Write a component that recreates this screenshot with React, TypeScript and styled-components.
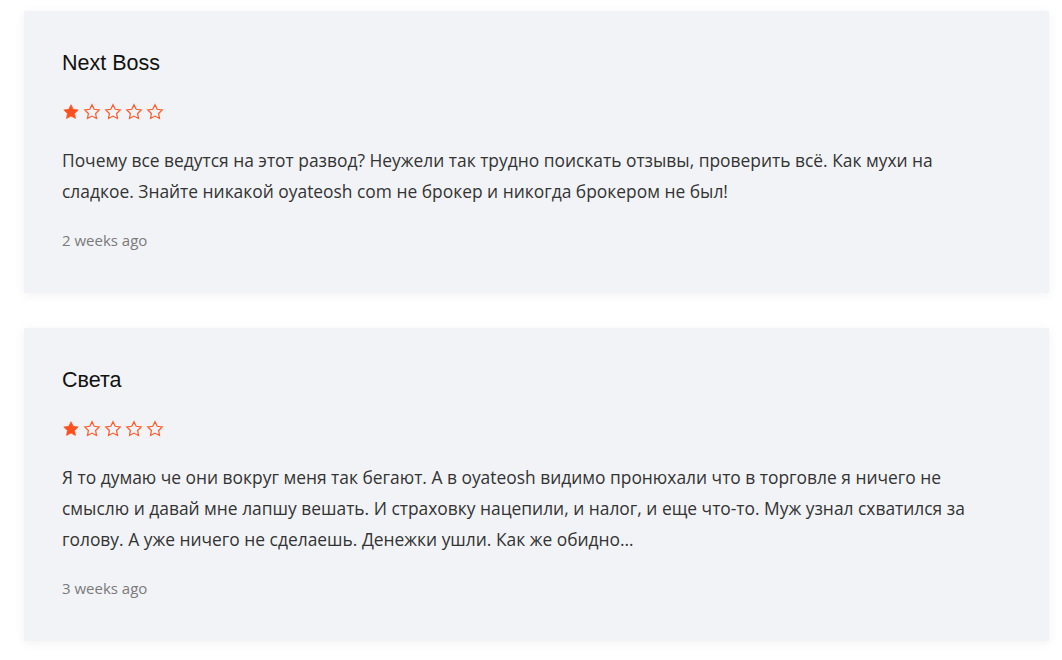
import React from "react";
import styled, { createGlobalStyle } from "styled-components";

const Global = createGlobalStyle`
  html, body { margin: 0; padding: 0; background: #ffffff; }
  * { box-sizing: border-box; }
`;

const Page = styled.div`
  display: flex;
  flex-direction: column;
  gap: 35px;
  padding: 11px 13px 20px 24px;
`;

const Card = styled.article`
  background: #f2f3f7;
  box-shadow: 0 2px 10px rgba(0, 0, 0, 0.06);
  padding: 38px 60px 42px 38px;
  display: flex;
  flex-direction: column;
`;

const Name = styled.h3`
  margin: 0;
  font-family: "Liberation Sans", Arial, sans-serif;
  font-weight: 400;
  font-size: 21.5px;
  line-height: 28px;
  color: #111111;
`;

const Stars = styled.div`
  display: flex;
  gap: 3px;
  margin-top: 26px;
  height: 18px;
  align-items: center;
`;

const Body = styled.p`
  margin: 24px 0 0 0;
  font-family: "Open Sans", sans-serif;
  font-size: 17.4px;
  line-height: 31px;
  color: #333333;
`;

const Date = styled.div`
  margin-top: 23px;
  font-family: "Open Sans", sans-serif;
  font-size: 15px;
  line-height: 21px;
  color: #7a7a7a;
`;

const StarPath =
  "M12 2.2l2.95 6.1 6.7.95-4.85 4.7 1.15 6.65L12 17.45l-5.95 3.15 1.15-6.65-4.85-4.7 6.7-.95z";

const Star: React.FC<{ filled: boolean }> = ({ filled }) => (
  <svg width="18" height="18" viewBox="0 0 24 24">
    <path
      d={StarPath}
      fill={filled ? "#ff4f1f" : "none"}
      stroke="#ff5a2a"
      strokeWidth={filled ? 1 : 1.6}
      strokeLinejoin="miter"
    />
  </svg>
);

const reviews = [
  {
    name: "Next Boss",
    rating: 1,
    text:
      "Почему все ведутся на этот развод? Неужели так трудно поискать отзывы, проверить всё. Как мухи на сладкое. Знайте никакой oyateosh com не брокер и никогда брокером не был!",
    date: "2 weeks ago",
  },
  {
    name: "Света",
    rating: 1,
    text:
      "Я то думаю че они вокруг меня так бегают. А в oyateosh видимо пронюхали что в торговле я ничего не смыслю и давай мне лапшу вешать. И страховку нацепили, и налог, и еще что-то. Муж узнал схватился за голову. А уже ничего не сделаешь. Денежки ушли. Как же обидно…",
    date: "3 weeks ago",
  },
];

export default function App() {
  return (
    <>
      <Global />
      <Page>
        {reviews.map((r) => (
          <Card key={r.name}>
            <Name>{r.name}</Name>
            <Stars>
              {[0, 1, 2, 3, 4].map((i) => (
                <Star key={i} filled={i < r.rating} />
              ))}
            </Stars>
            <Body>{r.text}</Body>
            <Date>{r.date}</Date>
          </Card>
        ))}
      </Page>
    </>
  );
}
